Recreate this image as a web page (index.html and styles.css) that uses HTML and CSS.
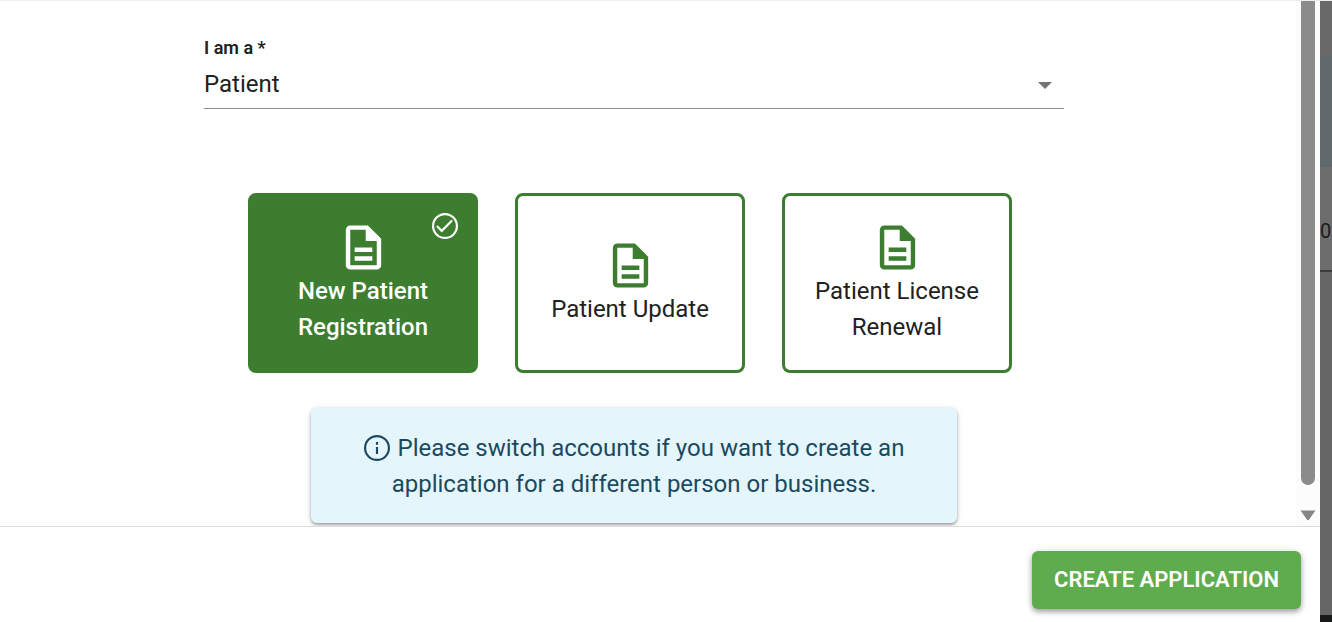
FILE: index.html
```html
<!DOCTYPE html>
<html lang="en">
<head>
  <meta charset="UTF-8">
  <title>Create Application</title>
  <link rel="stylesheet" href="styles.css">
</head>
<body>

<svg class="icon-defs" aria-hidden="true">
  <symbol id="icon-doc" viewBox="0 0 24 24">
    <path d="M8 16h8v2H8zm0-4h8v2H8zm6-10H6c-1.100 0-2 .900-2 2v16c0 1.100.890 2 1.990 2H18c1.100 0 2-.900 2-2V8l-6-6zm4 18H6V4h7v5h5v11z"/>
  </symbol>
</svg>

<main class="dialog">
  <div class="dialog-body">
    <form class="content" id="applicationForm">
      <div class="field">
        <label for="applicantType">I am a *</label>
        <div class="select-wrap">
          <select id="applicantType">
            <option>Patient</option>
          </select>
          <svg class="arrow" viewBox="0 0 14 7"><path d="M0 0h14L7 7z"/></svg>
        </div>
      </div>

      <div class="cards">
        <button type="button" class="card selected">
          <svg class="check" viewBox="0 0 24 24"><circle cx="12" cy="12" r="11"/><path d="M4.500 12l4.500 4.500L18.500 7"/></svg>
          <svg class="doc"><use href="#icon-doc"/></svg>
          <span>New Patient Registration</span>
        </button>
        <button type="button" class="card">
          <svg class="doc"><use href="#icon-doc"/></svg>
          <span>Patient Update</span>
        </button>
        <button type="button" class="card">
          <svg class="doc"><use href="#icon-doc"/></svg>
          <span>Patient License Renewal</span>
        </button>
      </div>

      <p class="notice">
        <svg class="info" viewBox="0 0 24 24"><circle cx="12" cy="12" r="11"/><path d="M12 11v6.500M12 6.500v2.400"/></svg>
        Please switch accounts if you want to create an application for a different person or business.
      </p>
    </form>

    <div class="scrollbar">
      <div class="thumb"></div>
      <svg viewBox="0 0 14 10"><path d="M0.500 1h13L8 9q-1 1-2 0z"/></svg>
    </div>
  </div>

  <footer class="actions">
    <button type="submit" form="applicationForm" class="create">CREATE APPLICATION</button>
  </footer>
</main>

<!-- dimmed page behind the dialog -->
<aside class="backdrop">
  <div class="strip-head"></div>
  <div class="strip-banner"></div>
  <div class="strip-panel">0</div>
  <div class="strip-rest"></div>
  <div class="strip-footer"></div>
</aside>

</body>
</html>
```
FILE: styles.css
```css
* {
  box-sizing: border-box;
}

body {
  font-family: Roboto, sans-serif;
  font-size: 24px;
  line-height: 36px;
  color: #212121;
  margin: 0;
  height: 100vh;
  display: flex;
  background: #fff;
  overflow: hidden;
}

button, select {
  font: inherit;
  color: inherit;
}

.icon-defs {
  display: none;
}

.dialog {
  flex: 1;
  min-width: 0;
  display: flex;
  flex-direction: column;
  background: #fff;
}

.dialog-body {
  flex: 1;
  min-height: 0;
  display: flex;
  overflow: hidden;
  border-top: 1px solid #eee;
  border-bottom: 1px solid #dcdcdc;
}

.content {
  flex: 1;
  display: flex;
  flex-direction: column;
  align-items: center;
  padding: 37px 28px 0 0;
}

/* applicant type */
.field {
  width: 100%;
  max-width: 860px;
}

.field label {
  display: block;
  font-size: 18px;
  line-height: 20px;
  font-weight: 600;
}

.select-wrap {
  position: relative;
}

.field select {
  display: block;
  width: 100%;
  height: 51px;
  padding: 1px 32px 0 0;
  border: none;
  border-bottom: 1px solid #8c8c8c;
  background: none;
  appearance: none;
}

.arrow {
  position: absolute;
  right: 12px;
  top: 24px;
  width: 14px;
  height: 7px;
  fill: #757575;
}

/* application cards */
.cards {
  display: flex;
  justify-content: center;
  gap: 37px;
  margin: 84px 8px 0 0;
}

.card {
  position: relative;
  width: 230px;
  height: 180px;
  padding: 0 24px;
  display: flex;
  flex-direction: column;
  align-items: center;
  justify-content: center;
  border: 3px solid #3d7d2f;
  border-radius: 8px;
  background: #fff;
  cursor: pointer;
}

.card .doc {
  width: 53px;
  height: 53px;
  flex-shrink: 0;
  margin-bottom: -1px;
  fill: #3d7d2f;
}

.card.selected {
  background: #3d7d2f;
  color: #fff;
  font-weight: 500;
}

.card.selected .doc {
  fill: #fff;
}

.check {
  position: absolute;
  top: 17px;
  right: 17px;
  width: 26px;
  height: 26px;
  fill: none;
  stroke: #fff;
  stroke-width: 2;
}

/* account notice */
.notice {
  width: 100%;
  max-width: 646px;
  margin: 35px 0 0;
  padding: 22px 32px 21px;
  border-radius: 6px;
  background: #e5f5fc;
  color: #1b4a60;
  text-align: center;
  box-shadow: 0 2px 3px rgba(0,0,0,0.3), 0 1px 6px rgba(0,0,0,0.15);
}

.info {
  width: 26px;
  height: 26px;
  margin-right: 2px;
  vertical-align: -5px;
  fill: none;
  stroke: #1b4a60;
  stroke-width: 2;
}

.scrollbar {
  width: 24px;
  display: flex;
  flex-direction: column;
  align-items: center;
  background: #fcfcfc;
}

.thumb {
  width: 14px;
  flex: 1;
  margin-bottom: 24px;
  border-radius: 0 0 7px 7px;
  background: #8b8b8b;
}

.scrollbar svg {
  width: 16px;
  height: 12px;
  margin-bottom: 5px;
  fill: #858585;
}

.actions {
  display: flex;
  justify-content: flex-end;
  padding: 24px 19px 13px;
}

.create {
  height: 58px;
  padding: 0 22px;
  border: none;
  border-radius: 6px;
  background: #5fac4e;
  color: #fff;
  font-size: 22px;
  font-weight: 600;
  cursor: pointer;
  box-shadow: 0 3px 5px rgba(0,0,0,0.3), 0 1px 10px rgba(0,0,0,0.12);
}

.create:hover {
  background: #4f9a3f;
}

.backdrop {
  width: 12px;
  display: flex;
  flex-direction: column;
  border-top: 1px solid #eee;
  overflow: hidden;
}

.strip-head {
  height: 54px;
  background: #696969;
}

.strip-banner {
  height: 112px;
  background: #606a6d;
}

.strip-panel {
  height: 105px;
  padding-top: 46px;
  background: #6d6d6d;
  border-bottom: 2px solid #3c3c3c;
  color: #1b1b1b;
  font-size: 20px;
}

.strip-rest {
  flex: 1;
  background: #666;
}

.strip-footer {
  height: 7px;
  background: #171a19;
}
```
